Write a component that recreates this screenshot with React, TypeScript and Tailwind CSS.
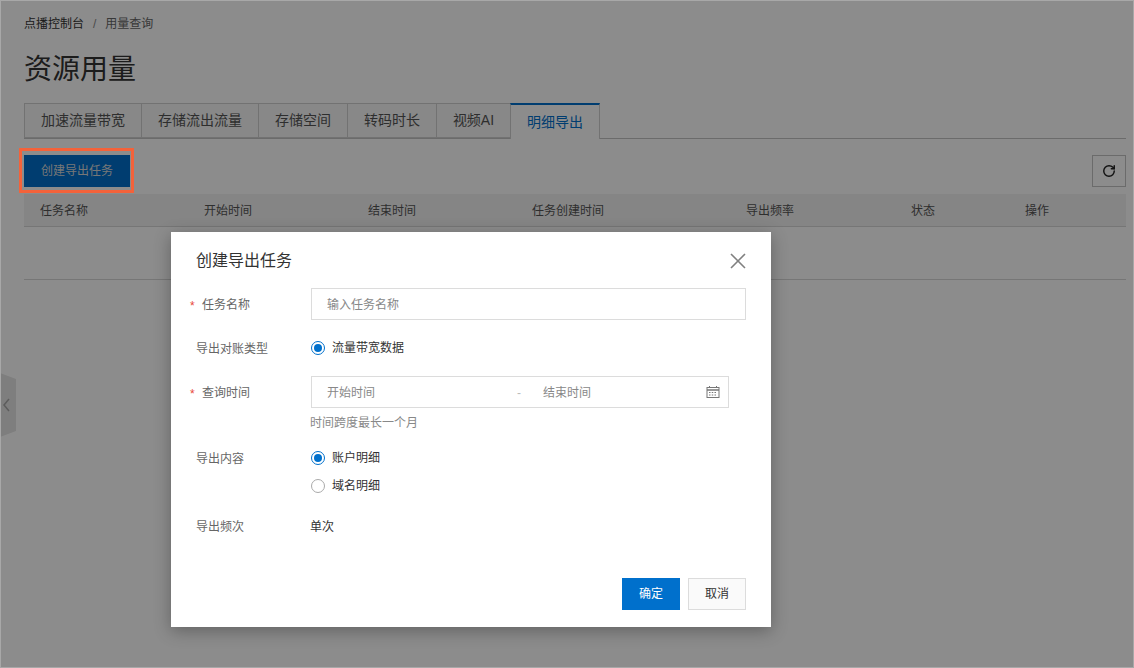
import { RotateCw } from "lucide-react";

const tabs = [
  { label: "加速流量带宽", width: "w-[117px]" },
  { label: "存储流出流量", width: "w-[117px]" },
  { label: "存储空间", width: "w-[89px]" },
  { label: "转码时长", width: "w-[89px]" },
  { label: "视频AI", width: "w-[74px]" },
];

const columns = [
  { label: "任务名称", width: "w-[164px]" },
  { label: "开始时间", width: "w-[164px]" },
  { label: "结束时间", width: "w-[164px]" },
  { label: "任务创建时间", width: "w-[214px]" },
  { label: "导出频率", width: "w-[165px]" },
  { label: "状态", width: "w-[114px]" },
  { label: "操作", width: "w-[101px]" },
];

function Radio({ checked, label }: { checked?: boolean; label: string }) {
  return (
    <div className="flex h-[18px] items-center text-[12px] text-[#333]">
      <span
        className={
          checked
            ? "mr-[7px] flex size-[14px] items-center justify-center rounded-full border border-[#0070cc]"
            : "mr-[7px] flex size-[14px] items-center justify-center rounded-full border border-[#aaa]"
        }
      >
        {checked ? <span className="size-[8px] rounded-full bg-[#0070cc]" /> : null}
      </span>
      {label}
    </div>
  );
}

function Label({
  required,
  className = "",
  children,
}: {
  required?: boolean;
  className?: string;
  children: string;
}) {
  return (
    <div className={`flex w-[134px] shrink-0 pl-[19px] text-[12px] leading-[18px] text-[#666] ${className}`}>
      <span className="relative">
        {required ? (
          <span className="absolute left-[-6px] top-[1px] text-[#e84738]">*</span>
        ) : null}
        <span className={required ? "ml-[6px]" : ""}>{children}</span>
      </span>
    </div>
  );
}

function CalendarIcon() {
  return (
    <svg width="14" height="14" viewBox="0 0 14 14" fill="none" stroke="#777">
      <rect x="1" y="2.5" width="12" height="10" />
      <path d="M1 5h12" strokeWidth="1.5" />
      <path d="M3.5 1v2M10.5 1v2" />
      <path d="M3 7.5h8M3 10h8" strokeDasharray="1.5 1.25" />
    </svg>
  );
}

function CreateTaskDialog() {
  return (
    <div className="absolute left-[171px] top-[232px] flex h-[395px] w-[600px] flex-col bg-white shadow-[0_4px_16px_rgba(0,0,0,0.3)]">
      <div className="flex items-center justify-between pl-[25px] pr-[25px] pt-[17px]">
        <h2 className="text-[16px] leading-[24px] text-[#333]">创建导出任务</h2>
        <svg width="16" height="16" viewBox="0 0 16 16" stroke="#808080" strokeWidth="1.6">
          <path d="M1 1l14 14M15 1L1 15" />
        </svg>
      </div>

      <div className="mt-[15px] flex items-center pr-[25px] pl-[6px]">
        <Label required className="pt-[2px]">任务名称</Label>
        <div className="flex h-[32px] flex-1 items-center border border-[#dcdcdc] pl-[15px] pt-[2px] text-[12px] text-[#888]">
          输入任务名称
        </div>
      </div>

      <div className="mt-[18px] flex items-center pl-[6px]">
        <Label className="pt-[2px]">导出对账类型</Label>
        <Radio checked label="流量带宽数据" />
      </div>

      <div className="mt-[18px] flex items-center pl-[6px]">
        <Label required className="pt-[2px]">查询时间</Label>
        <div className="flex h-[32px] w-[418px] items-center border border-[#dcdcdc] pl-[15px] pr-[8px] text-[12px] text-[#888]">
          <span className="w-[190px] pt-[2px]">开始时间</span>
          <span className="w-[26px] pt-[2px] text-[#bbb]">-</span>
          <span className="flex-1 pt-[2px]">结束时间</span>
          <CalendarIcon />
        </div>
      </div>
      <div className="ml-[139px] mt-[6px] text-[12px] leading-[18px] text-[#888]">时间跨度最长一个月</div>

      <div className="mt-[17px] flex pl-[6px]">
        <Label className="pt-[1px]">导出内容</Label>
        <div className="flex flex-col gap-[10px]">
          <Radio checked label="账户明细" />
          <Radio label="域名明细" />
        </div>
      </div>

      <div className="mt-[23px] flex items-center pl-[6px]">
        <Label>导出频次</Label>
        <span className="-ml-[1px] text-[12px] leading-[18px] text-[#333]">单次</span>
      </div>

      <div className="mt-auto flex justify-end gap-[8px] pb-[17px] pr-[25px]">
        <button type="button" className="h-[32px] w-[58px] bg-[#0070cc] text-[12px] text-white">
          确定
        </button>
        <button type="button" className="h-[32px] w-[58px] border border-[#dcdcdc] bg-[#fafafa] text-[12px] text-[#333]">
          取消
        </button>
      </div>
    </div>
  );
}

export default function App() {
  return (
    <div className="relative h-[668px] w-[1134px] overflow-hidden bg-white font-['Liberation_Sans','Noto_Sans_CJK_SC',sans-serif]">
      <div className="pl-[24px] pr-[8px]">
        <div className="pt-[15px] text-[12px] leading-[18px]">
          <span className="text-[#333]">点播控制台</span>
          <span className="mx-[9px] text-[#888]">/</span>
          <span className="text-[#666]">用量查询</span>
        </div>
        <h1 className="mt-[16px] text-[28px] leading-[42px] text-[#333]">资源用量</h1>

        <div className="mt-[12px] flex h-[36px] border-b border-[#c4c4c4]">
          {tabs.map((tab) => (
            <div
              key={tab.label}
              className={`${tab.width} flex h-[35px] items-center justify-center border border-r-0 border-[#d0d0d0] bg-[#f7f7f7] text-[14px] text-[#555]`}
            >
              {tab.label}
            </div>
          ))}
          <div className="flex h-[36px] w-[90px] items-center justify-center border-x border-t-2 border-x-[#d0d0d0] border-t-[#0070cc] bg-white text-[14px] text-[#0070cc]">
            明细导出
          </div>
        </div>

        <div className="mt-[16px] flex items-center justify-between">
          <button type="button" className="h-[32px] w-[106px] bg-[#0070cc] text-[12px] text-[#d9d9d9]">
            创建导出任务
          </button>
          <button type="button" className="flex h-[32px] w-[34px] items-center justify-center border border-[#c4c4c4] text-[#222]">
            <RotateCw size={14} strokeWidth={2.5} />
          </button>
        </div>

        <div className="mt-[7px] flex h-[33px] items-center border-b border-[#d8d8d8] bg-[#f2f2f2] pl-[16px] pt-[2px] text-[12px] text-[#555]">
          {columns.map((col) => (
            <div key={col.label} className={col.width}>
              {col.label}
            </div>
          ))}
        </div>
        <div className="h-[53px] border-b border-[#d8d8d8]" />
      </div>

      {/* sidebar handle */}
      <svg width="16" height="64" viewBox="0 0 16 64" className="absolute left-0 top-[373px]">
        <path d="M0 0L16 6V58L0 64Z" fill="#e6e6e6" />
        <path d="M9 26L4 32L9 38" fill="none" stroke="#a8a8a8" strokeWidth="1.5" />
      </svg>

      <div className="absolute inset-0 border border-[#a8a8a8] bg-black/45" />

      <div className="absolute left-[19px] top-[148px] h-[45px] w-[115px] border-[3px] border-[#f4623a]" />

      <CreateTaskDialog />
    </div>
  );
}
